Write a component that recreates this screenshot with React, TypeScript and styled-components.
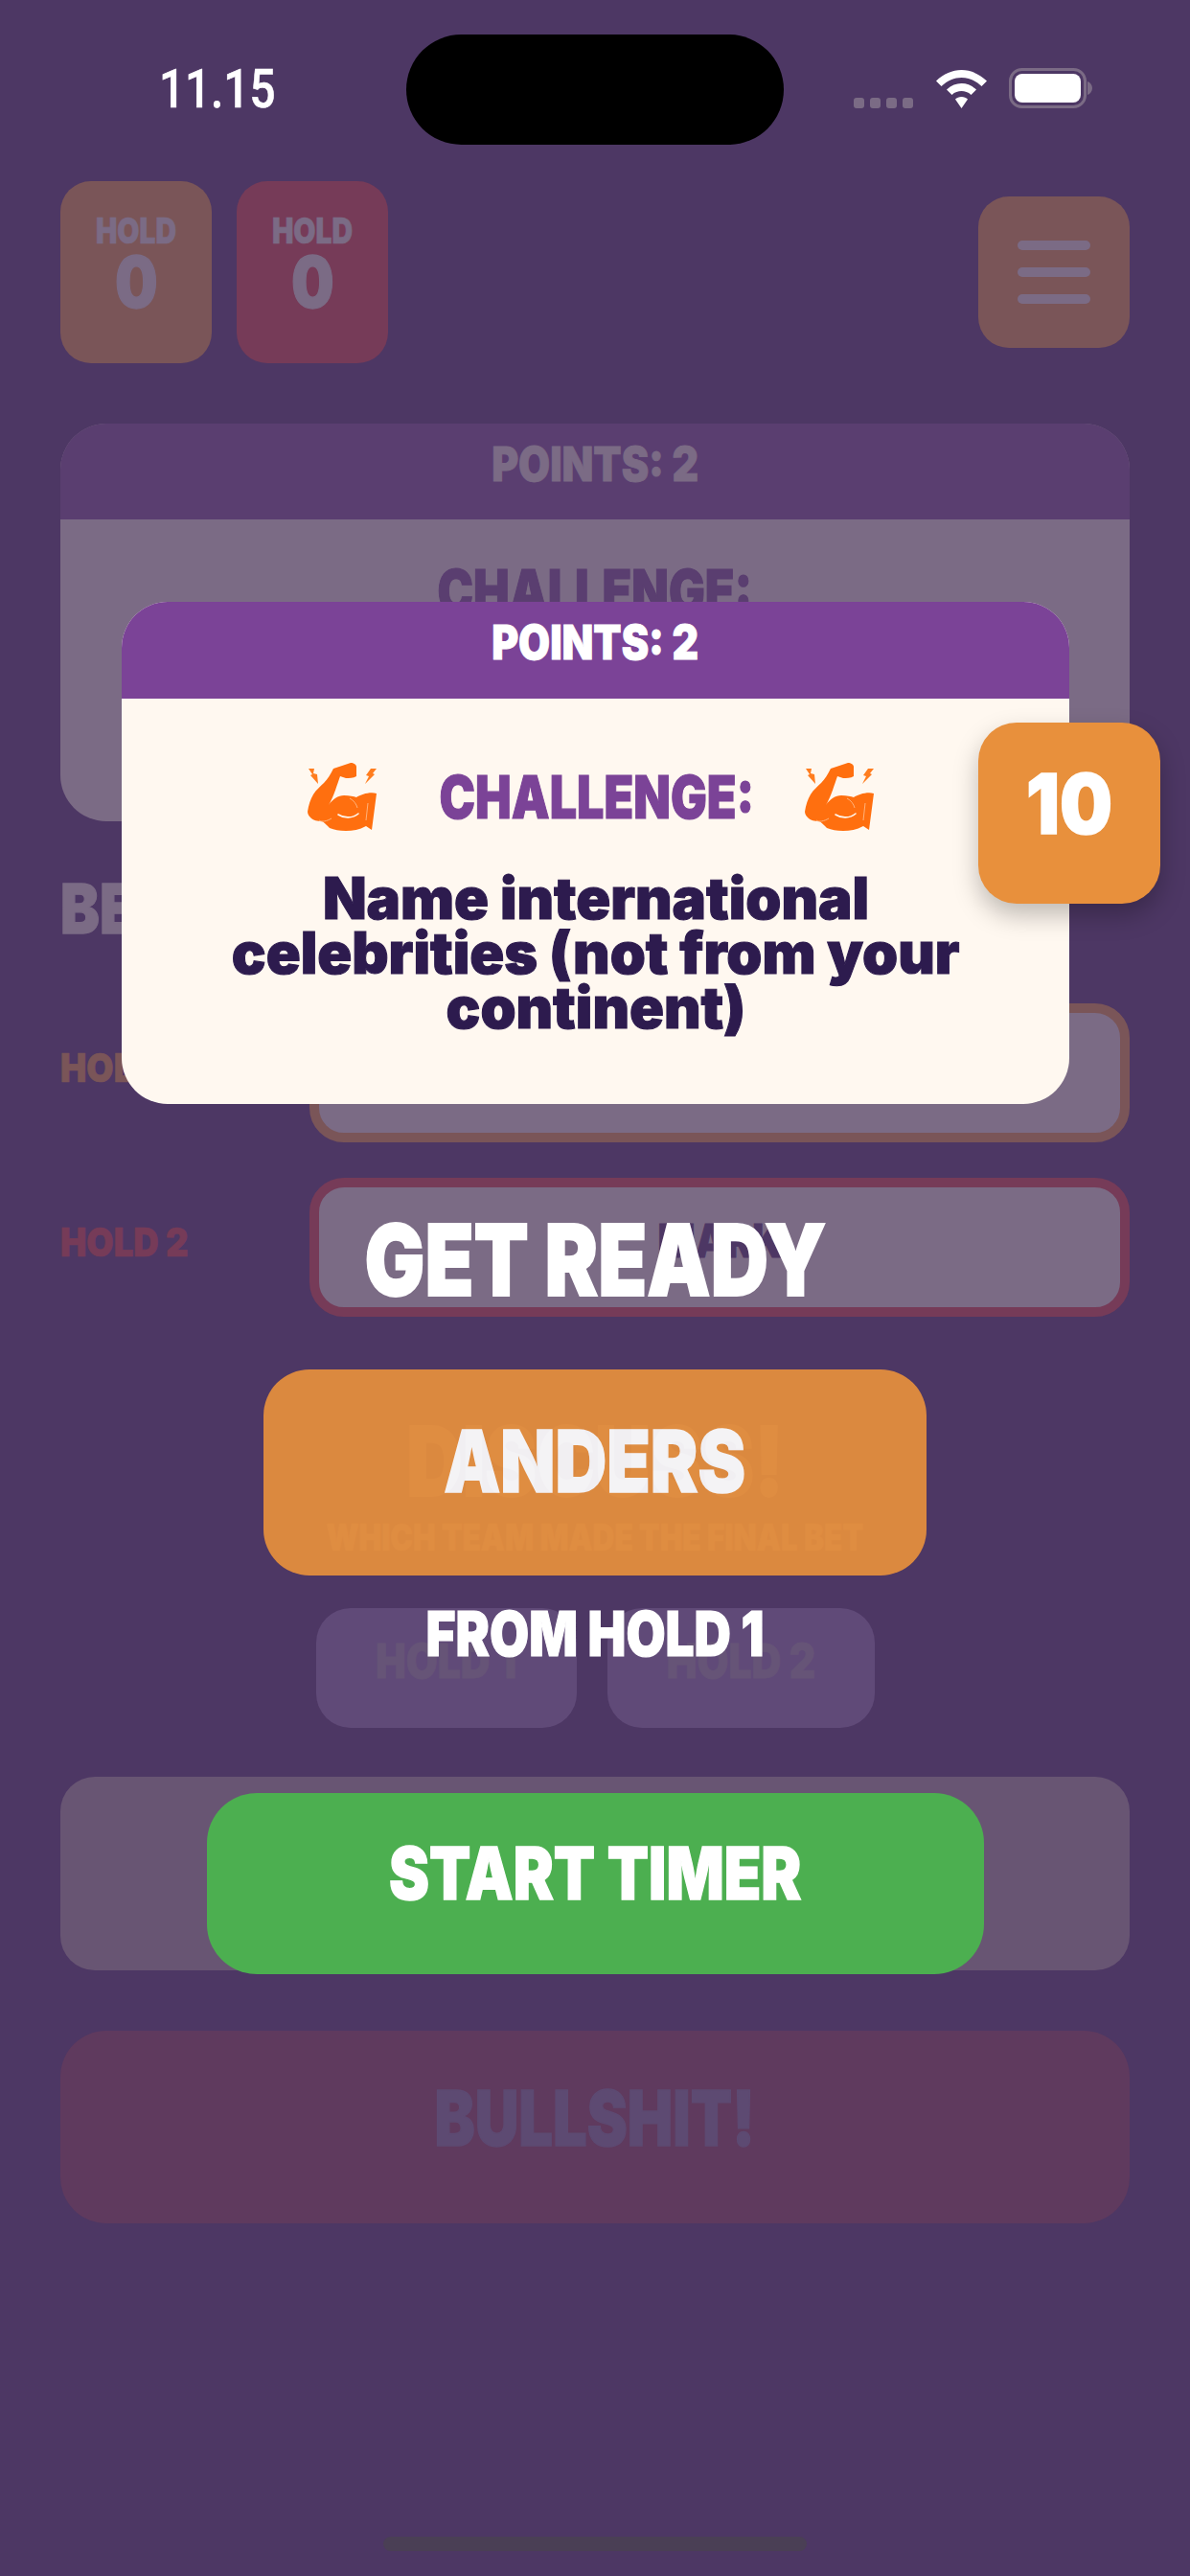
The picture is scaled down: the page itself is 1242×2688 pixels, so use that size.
import styled, { createGlobalStyle } from 'styled-components';

const GlobalStyle = createGlobalStyle`
  html, body {
    margin: 0;
    padding: 0;
    background: #4d3764;
  }
  * { box-sizing: border-box; }
`;

const Display = styled.span<{ $size: number; $sx?: number; $color?: string; $origin?: string }>`
  display: inline-block;
  font-family: Inter, 'Liberation Sans', sans-serif;
  font-weight: 900;
  font-size: ${(p) => p.$size}px;
  line-height: 1;
  white-space: nowrap;
  color: ${(p) => p.$color || '#fff'};
  -webkit-text-stroke: ${(p) => p.$size * 0.018}px ${(p) => p.$color || '#fff'};
  transform: scaleX(${(p) => p.$sx || 0.85});
  transform-origin: ${(p) => p.$origin || 'center'};
`;

const Page = styled.div`
  position: relative;
  width: 1242px;
  height: 2688px;
  padding: 0 63px;
  overflow: hidden;
  background: #4d3764;
`;

const StatusBar = styled.div`
  height: 189px;
  margin: 0 -63px;
  padding: 36px 0 0 166px;
  display: flex;
  align-items: flex-start;
`;

const Time = styled.span`
  flex: none;
  margin-top: 29px;
  width: 119px;
  font-family: Roboto, sans-serif;
  font-weight: 500;
  font-size: 56px;
  line-height: 56px;
  color: #fff;
  white-space: nowrap;
  -webkit-text-stroke: 0.6px #fff;
  transform: scaleX(0.85);
  transform-origin: left;
`;

const Island = styled.div`
  flex: none;
  width: 394px;
  height: 115px;
  margin-left: 139px;
  border-radius: 58px;
  background: #000;
`;

const StatusIcons = styled.div`
  flex: none;
  margin: 35px 0 0 73px;
  display: flex;
  align-items: flex-end;
`;

const Dots = styled.div`
  display: flex;
  gap: 6px;
  margin-right: 24px;
`;

const Dot = styled.i`
  width: 11px;
  height: 11px;
  border-radius: 3px;
  background: #7b6b85;
`;

const TopRow = styled.div`
  display: flex;
  height: 190px;
  gap: 26px;
`;

const HoldCard = styled.div<{ $bg: string }>`
  width: 158px;
  height: 190px;
  padding-top: 33px;
  border-radius: 32px;
  background: ${(p) => p.$bg};
  display: flex;
  flex-direction: column;
  align-items: center;
`;

const HoldCount = styled.div`
  margin-top: -2px;
`;

const MenuButton = styled.div`
  width: 158px;
  height: 158px;
  margin: 16px 0 0 auto;
  border-radius: 32px;
  background: #7a5558;
  display: flex;
  flex-direction: column;
  justify-content: center;
  align-items: center;
  gap: 18px;
`;

const MenuLine = styled.i`
  width: 76px;
  height: 10px;
  border-radius: 5px;
  background: #7b6b85;
`;

const Panel = styled.div`
  margin-top: 63px;
  height: 415px;
  border-radius: 48px;
  overflow: hidden;
  background: #7b6b85;
`;

const PanelHead = styled.div`
  height: 100px;
  padding-top: 18px;
  background: #5a3e70;
  display: flex;
  justify-content: center;
  align-items: flex-start;
`;

const PanelBody = styled.div`
  padding-top: 44px;
  display: flex;
  justify-content: center;
`;

const BetsTitle = styled.div`
  margin-top: 55px;
  height: 80px;
  line-height: 0;
`;

const BetRows = styled.div`
  margin-top: 55px;
  display: flex;
  flex-direction: column;
  gap: 37px;
`;

const BetRow = styled.div`
  display: flex;
  align-items: center;
  justify-content: space-between;
  height: 145px;
`;

const BetLabel = styled.div`
  padding-bottom: 10px;
`;

const BetInput = styled.div<{ $border: string }>`
  width: 856px;
  height: 145px;
  padding-top: 32px;
  border: 10px solid ${(p) => p.$border};
  border-radius: 36px;
  background: #7b6b85;
  display: flex;
  justify-content: center;
  align-items: flex-start;
`;

const Discuss = styled.div`
  margin-top: 101px;
  display: flex;
  flex-direction: column;
  align-items: center;
  gap: 10px;
`;

const HoldPicker = styled.div`
  margin-top: 55px;
  display: flex;
  justify-content: center;
  gap: 32px;
`;

const PickButton = styled.div<{ $w: number }>`
  width: ${(p) => p.$w}px;
  height: 125px;
  padding-top: 30px;
  border-radius: 36px;
  background: #604a78;
  display: flex;
  justify-content: center;
  align-items: flex-start;
`;

const TimerSlot = styled.div`
  margin-top: 51px;
  height: 202px;
  border-radius: 36px;
  background: #685573;
`;

const BullshitButton = styled.div`
  margin-top: 63px;
  height: 201px;
  padding-top: 51px;
  border-radius: 48px;
  background: #5f3a5e;
  display: flex;
  justify-content: center;
  align-items: flex-start;
`;

const HomeBar = styled.div`
  position: absolute;
  left: 400px;
  top: 2647px;
  width: 442px;
  height: 15px;
  border-radius: 8px;
  background: #4a3f55;
`;

const Modal = styled.div`
  position: absolute;
  left: 127px;
  top: 628px;
  width: 989px;
  height: 524px;
  border-radius: 48px;
  background: #fff8f0;
`;

const ModalHead = styled.div`
  height: 101px;
  padding-top: 18px;
  border-radius: 48px 48px 0 0;
  background: #7b4397;
  display: flex;
  justify-content: center;
  align-items: flex-start;
`;

const ChallengeRow = styled.div`
  margin-top: 67px;
  padding: 0 12px 0 2px;
  display: flex;
  justify-content: center;
  align-items: center;
  gap: 27px;
  & > svg:last-child { margin-left: -12px; }
`;

const ChallengeBody = styled.div`
  margin-top: 40px;
  text-align: center;
`;

const BodyLine = styled.div`
  height: 57px;
`;

const CountBadge = styled.div`
  position: absolute;
  left: 894px;
  top: 126px;
  width: 190px;
  height: 189px;
  padding-top: 42px;
  border-radius: 40px;
  background: #e8903c;
  box-shadow: 0 12px 26px rgba(0, 0, 0, 0.25);
  display: flex;
  justify-content: center;
  align-items: flex-start;
`;

const ReadyStack = styled.div`
  position: absolute;
  left: 0;
  right: 0;
  top: 1263px;
  display: flex;
  flex-direction: column;
  align-items: center;
`;

const NameCard = styled.div`
  width: 692px;
  height: 215px;
  margin-top: 63px;
  padding-top: 51px;
  border-radius: 48px;
  background: #e8903c;
  opacity: 0.92;
  display: flex;
  justify-content: center;
  align-items: flex-start;
`;

const FromLine = styled.div`
  margin-top: 28px;
`;

const StartButton = styled.div`
  width: 811px;
  height: 189px;
  margin-top: 134px;
  padding-top: 45px;
  border-radius: 52px;
  background: #4caf50;
  display: flex;
  justify-content: center;
  align-items: flex-start;
`;

const Flex = () => (
  <svg width="72" height="71" viewBox="0 0 72 71">
    <path
      fill="#ff6f0f"
      d="M27 6 L45 0 C48 0 51 2 51 4 L51 14 C48 16 43 16 40 16 L34 14 C31 22 28 34 22 44 C26 38 32 34 38 34 C44 34 48 35 51 36 C56 33 65 30 72 32 L67 70 L61 66 C54 70 47 71 40 71 C33 71 28 70 23 68 C20 65 17 62 15 61 C10 61 6 60 4 58 C2 56 0 54 0 51 C1 44 3 38 6 33 C9 28 13 25 17 21 C21 17 24 12 27 6 Z"
    />
    <path fill="none" stroke="#fff8f0" strokeWidth="1.6" strokeLinecap="round" d="M32 54 C38 58 47 58 53 53" />
    <path fill="none" stroke="#ffb27a" strokeWidth="1" d="M44 37 C48 39 51 43 52 47" />
    <path fill="none" stroke="#ffb27a" strokeWidth="1" d="M63 42 L61 60" />
    <path fill="none" stroke="#ffb27a" strokeWidth="1" d="M12 60 C15 62 20 61 25 58" />
    <polygon fill="#ff7d1f" points="1,6 7,6 6,11 10,12 11,22 3,13 5,12" />
    <polygon fill="#ff7d1f" points="66,6 72,6 68,11 70,12 60,22 64,14 61,13" />
  </svg>
);

const Wifi = () => (
  <svg width="53" height="40" viewBox="0 0 53 40" style={{ marginRight: 23 }}>
    <path fill="#fff" d="M26.5 0 C36 0 45 4 53 11.5 L47.5 17 C41 11 34 8 26.5 8 C19 8 12 11 5.5 17 L0 11.5 C8 4 17 0 26.5 0 Z" />
    <path fill="#fff" d="M26.5 14 C32 14 37 16 42 20.5 L36.5 26 C33.5 23 30 22 26.5 22 C23 22 19.5 23 16.5 26 L11 20.5 C16 16 21 14 26.5 14 Z" />
    <path fill="#fff" d="M26.5 28 C29 28 31.5 29 33 30.5 L26.5 40 L20 30.5 C21.5 29 24 28 26.5 28 Z" />
  </svg>
);

const Battery = () => (
  <svg width="87" height="42" viewBox="0 0 87 42">
    <rect x="1.5" y="1.5" width="78" height="39" rx="12" fill="none" stroke="#7b6b85" strokeWidth="3" />
    <rect x="6" y="6" width="69" height="30" rx="8" fill="#fff" />
    <path fill="#7b6b85" d="M82 14 C85 15 87 18 87 21 C87 24 85 27 82 28 Z" />
  </svg>
);

const App = () => (
  <>
    <GlobalStyle />
    <Page>
      <StatusBar>
        <Time>11.15</Time>
        <Island />
        <StatusIcons>
          <Dots>
            <Dot />
            <Dot />
            <Dot />
            <Dot />
          </Dots>
          <Wifi />
          <Battery />
        </StatusIcons>
      </StatusBar>

      <TopRow>
        <HoldCard $bg="#7a5558">
          <Display $size={37} $color="#7b6b85" $sx={0.81}>HOLD</Display>
          <HoldCount>
            <Display $size={74} $color="#7b6b85">0</Display>
          </HoldCount>
        </HoldCard>
        <HoldCard $bg="#763b58">
          <Display $size={37} $color="#7b6b85" $sx={0.81}>HOLD</Display>
          <HoldCount>
            <Display $size={74} $color="#7b6b85">0</Display>
          </HoldCount>
        </HoldCard>
        <MenuButton>
          <MenuLine />
          <MenuLine />
          <MenuLine />
        </MenuButton>
      </TopRow>

      <Panel>
        <PanelHead>
          <Display $size={49} $color="#7b6b85" $sx={0.87}>POINTS: 2</Display>
        </PanelHead>
        <PanelBody>
          <Display $size={62} $color="#5a3e70" $sx={0.81}>CHALLENGE:</Display>
        </PanelBody>
      </Panel>

      <BetsTitle>
        <Display $size={72} $color="#7b6b85" $origin="left">BETS</Display>
      </BetsTitle>

      <BetRows>
        <BetRow>
          <BetLabel>
            <Display $size={41} $color="#7a5558" $sx={0.89} $origin="left">HOLD 1</Display>
          </BetLabel>
          <BetInput $border="#7a5558">
            <Display $size={48} $color="#4d3764">ANDERS</Display>
          </BetInput>
        </BetRow>
        <BetRow>
          <BetLabel>
            <Display $size={41} $color="#763b58" $sx={0.89} $origin="left">HOLD 2</Display>
          </BetLabel>
          <BetInput $border="#763b58">
            <Display $size={48} $color="#4d3764">MARK</Display>
          </BetInput>
        </BetRow>
      </BetRows>

      <Discuss>
        <Display $size={100} $color="#7b6b85" $sx={0.81}>DISCUSS!</Display>
        <Display $size={38} $color="#7b6b85" $sx={0.83}>WHICH TEAM MADE THE FINAL BET</Display>
      </Discuss>

      <HoldPicker>
        <PickButton $w={272}>
          <Display $size={50} $color="#665477">HOLD 1</Display>
        </PickButton>
        <PickButton $w={279}>
          <Display $size={50} $color="#665477">HOLD 2</Display>
        </PickButton>
      </HoldPicker>

      <TimerSlot />

      <BullshitButton>
        <Display $size={80} $color="#5d4a72" $sx={0.79}>BULLSHIT!</Display>
      </BullshitButton>

      <HomeBar />

      <Modal>
        <ModalHead>
          <Display $size={49} $sx={0.87}>POINTS: 2</Display>
        </ModalHead>
        <ChallengeRow>
          <Flex />
          <Display $size={62} $color="#7b4397" $sx={0.81}>CHALLENGE:</Display>
          <Flex />
        </ChallengeRow>
        <ChallengeBody>
          <BodyLine>
            <Display $size={60} $color="#2d1b4e" $sx={0.99}>Name international</Display>
          </BodyLine>
          <BodyLine>
            <Display $size={60} $color="#2d1b4e" $sx={0.99}>celebrities (not from your</Display>
          </BodyLine>
          <BodyLine>
            <Display $size={60} $color="#2d1b4e" $sx={0.99}>continent)</Display>
          </BodyLine>
        </ChallengeBody>
        <CountBadge>
          <Display $size={86} $sx={0.9}>10</Display>
        </CountBadge>
      </Modal>

      <ReadyStack>
        <Display $size={103} $sx={0.81}>GET READY</Display>
        <NameCard>
          <Display $size={90} $sx={0.826}>ANDERS</Display>
        </NameCard>
        <FromLine>
          <Display $size={65} $sx={0.817}>FROM HOLD 1</Display>
        </FromLine>
        <StartButton>
          <Display $size={76} $sx={0.83}>START TIMER</Display>
        </StartButton>
      </ReadyStack>
    </Page>
  </>
);

export default App;
